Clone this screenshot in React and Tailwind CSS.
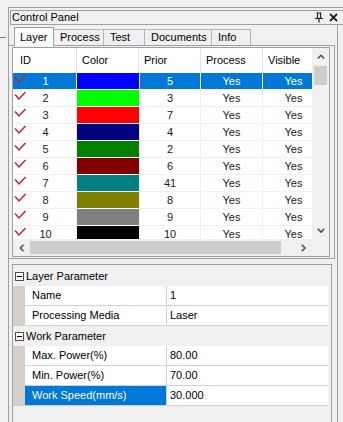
import React from 'react';

const rows = [
  { id: 1, sw: 'bg-[#0000ff]', prior: 5 },
  { id: 2, sw: 'bg-[#00ff00]', prior: 3 },
  { id: 3, sw: 'bg-[#ff0000]', prior: 7 },
  { id: 4, sw: 'bg-[#000080]', prior: 4 },
  { id: 5, sw: 'bg-[#008000]', prior: 2 },
  { id: 6, sw: 'bg-[#800000]', prior: 6 },
  { id: 7, sw: 'bg-[#008080]', prior: 41 },
  { id: 8, sw: 'bg-[#808000]', prior: 8 },
  { id: 9, sw: 'bg-[#808080]', prior: 9 },
  { id: 10, sw: 'bg-[#000000]', prior: 10 },
];

function Chevron({ dir }) {
  const d = {
    up: 'M0.8 4.5 L4 1.3 L7.2 4.5',
    down: 'M0.8 0.8 L4 4 L7.2 0.8',
  }[dir];
  if (dir === 'left' || dir === 'right') {
    const p = dir === 'left' ? 'M4.5 0.8 L1.3 4 L4.5 7.2' : 'M0.8 0.8 L4 4 L0.8 7.2';
    return (
      <svg width="6" height="8" viewBox="0 0 6 8">
        <path d={p} fill="none" stroke="#505050" strokeWidth="1.6" />
      </svg>
    );
  }
  return (
    <svg width="8" height="6" viewBox="0 0 8 6">
      <path d={d} fill="none" stroke="#505050" strokeWidth="1.6" />
    </svg>
  );
}

function Check() {
  return (
    <svg width="14" height="10" viewBox="0 0 14 10" className="absolute left-0 top-[1px]">
      <path d="M2 3.5 L6 8 L12.5 1" fill="none" stroke="#c8202a" strokeWidth="1.5" />
    </svg>
  );
}

function GridRow({ r }) {
  const sel = r.id === 1;
  const cell = sel
    ? 'bg-[#0078d7] text-white border-white'
    : 'bg-white text-[#1a1a1a] border-[#f0f0f0]';
  return (
    <div className="flex h-[17px] shrink-0">
      <div className={`relative w-[64px] shrink-0 flex items-center justify-center border-r border-b ${cell}`}>
        <Check />
        <span className="pl-[2px]">{r.id}</span>
      </div>
      <div className="w-[62px] shrink-0 border-b border-white bg-white">
        <div className={`h-full w-full ${r.sw}`} />
      </div>
      <div className={`w-[62px] shrink-0 flex items-center justify-center border-l border-r border-b ${cell}`}>
        {r.prior}
      </div>
      <div className={`w-[62px] shrink-0 flex items-center justify-center border-r border-b ${cell}`}>
        Yes
      </div>
      <div className={`w-[62px] shrink-0 flex items-center justify-center border-r border-b ${cell}`}>
        Yes
      </div>
    </div>
  );
}

function Header() {
  const h = 'shrink-0 flex items-center border-r border-[#e5e5e5] bg-white text-black';
  return (
    <div className="flex h-[25px] shrink-0">
      <div className={`w-[64px] pl-[7px] ${h}`}>ID</div>
      <div className={`w-[62px] pl-[5px] ${h}`}>Color</div>
      <div className={`w-[62px] pl-[5px] ${h}`}>Prior</div>
      <div className={`w-[62px] pl-[5px] ${h}`}>Process</div>
      <div className={`w-[62px] pl-[5px] ${h}`}>Visible</div>
    </div>
  );
}

function PropRow({ label, value, selected }) {
  return (
    <div className="flex h-[20px] shrink-0">
      <div className="w-[12px] shrink-0 bg-[#d4d0c8]" />
      <div
        className={`w-[142px] shrink-0 border-b border-r border-[#d0d0d0] pl-[7px] flex items-center ${
          selected ? 'bg-[#0078d7] text-white' : 'bg-white text-black'
        }`}
      >
        {label}
      </div>
      <div className="flex-1 bg-white border-b border-[#d0d0d0] pl-[3px] flex items-center text-black">
        {value}
      </div>
    </div>
  );
}

function Category({ label }) {
  return (
    <div className="flex h-[20px] shrink-0 items-center bg-[#f0f0f0]">
      <div className="ml-[2px] w-[9px] h-[9px] border border-[#505050] bg-white flex items-center justify-center">
        <div className="w-[5px] h-px bg-black" />
      </div>
      <span className="ml-[2px] text-black">{label}</span>
    </div>
  );
}

export default function App() {
  const tabs = [
    { t: 'Process', w: 'w-[50px]' },
    { t: 'Test', w: 'w-[41px]' },
    { t: 'Documents', w: 'w-[67px]' },
    { t: 'Info', w: 'w-[39px]' },
  ];
  return (
    <div className="flex w-[343px] h-[422px] overflow-hidden bg-[#f0f0f0] font-['Liberation_Sans',Arial,sans-serif] text-[11px] leading-none">
      <div className="w-[8px] shrink-0">
        <div className="mt-[37px] h-px w-[6px] bg-[#808080]" />
      </div>
      <div className="flex-1 flex flex-col mt-[7px] border-t border-l border-[#a0a0a0] min-w-0">
        {/* title bar */}
        <div className="mt-[2px] ml-[1px] h-[15px] shrink-0 border-t border-l border-b border-[#a0a0a0] flex items-center">
          <span className="pl-[1px] text-black">Control Panel</span>
          <div className="ml-auto flex items-center gap-[5px] pr-[5px]">
            <svg width="10" height="11" viewBox="0 0 10 11">
              <path d="M3.5 1 V6 M6.5 1 V6 M2.5 1 H7.5 M1 6.5 H9 M5 6.5 V10.5" fill="none" stroke="#202020" strokeWidth="1.2" />
            </svg>
            <svg width="9" height="9" viewBox="0 0 9 9">
              <path d="M1 1 L8 8 M8 1 L1 8" fill="none" stroke="#202020" strokeWidth="1.8" />
            </svg>
          </div>
        </div>
        {/* body */}
        <div className="flex-1 flex flex-col mr-[5px] border-r border-[#a0a0a0] min-h-0">
          {/* tabs */}
          <div className="mt-[2px] h-[18px] shrink-0 flex items-end pl-[5px]">
            <div className="relative z-10 -mb-px h-[19px] w-[40px] shrink-0 border-t border-l border-r border-[#a0a0a0] bg-[#fcfcfc] flex items-center pl-[5px] text-black">
              Layer
            </div>
            {tabs.map((tb) => (
              <div
                key={tb.t}
                className={`h-[16px] ${tb.w} shrink-0 border-t border-r border-[#b4b4b4] bg-[#f0f0f0] flex items-center pl-[6px] text-black`}
              >
                {tb.t}
              </div>
            ))}
          </div>
          {/* tab page */}
          <div className="shrink-0 mr-[2px] border-t border-r border-b border-[#a0a0a0] pt-[1px] pb-[1px] pl-[3px]">
            <div className="w-[318px] h-[210px] border border-[#a0a0a0] flex flex-col bg-white">
              <div className="flex flex-1 min-h-0">
                <div className="flex-1 overflow-hidden flex flex-col min-w-0">
                  <Header />
                  {rows.map((r) => (
                    <GridRow key={r.id} r={r} />
                  ))}
                </div>
                <div className="w-[17px] shrink-0 bg-[#f0f0f0] flex flex-col">
                  <div className="h-[17px] shrink-0 flex items-center justify-center">
                    <Chevron dir="up" />
                  </div>
                  <div className="flex-1 px-[2px]">
                    <div className="mt-[1px] h-[19px] bg-[#cdcdcd]" />
                  </div>
                  <div className="h-[17px] shrink-0 flex items-center justify-center">
                    <Chevron dir="down" />
                  </div>
                </div>
              </div>
              <div className="h-[17px] shrink-0 flex bg-[#f0f0f0]">
                <div className="flex-1 flex items-center">
                  <div className="w-[17px] h-full shrink-0 flex items-center justify-center">
                    <Chevron dir="left" />
                  </div>
                  <div className="w-[251px] h-[13px] bg-[#cdcdcd]" />
                  <div className="flex-1" />
                  <div className="w-[17px] h-full shrink-0 flex items-center justify-center">
                    <Chevron dir="right" />
                  </div>
                </div>
                <div className="w-[17px] shrink-0" />
              </div>
            </div>
          </div>
          {/* property grid */}
          <div className="mt-[5px] ml-[3px] w-[320px] flex-1 border-t border-l border-r border-[#a0a0a0] pt-[1px] pr-[3px] flex flex-col bg-[#f0f0f0]">
            <Category label="Layer Parameter" />
            <PropRow label="Name" value="1" />
            <PropRow label="Processing Media" value="Laser" />
            <Category label="Work Parameter" />
            <PropRow label="Max. Power(%)" value="80.00" />
            <PropRow label="Min. Power(%)" value="70.00" />
            <PropRow label="Work Speed(mm/s)" value="30.000" selected />
          </div>
        </div>
      </div>
    </div>
  );
}
